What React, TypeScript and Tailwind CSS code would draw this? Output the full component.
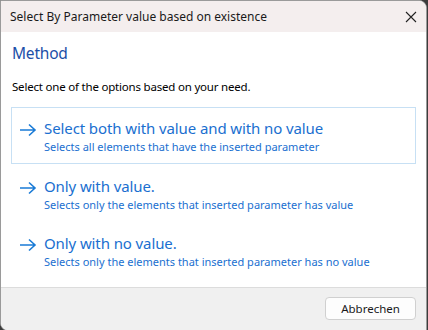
import React from 'react';

const options = [
  {
    title: 'Select both with value and with no value',
    desc: 'Selects all elements that have the inserted parameter',
    active: true,
  },
  {
    title: 'Only with value.',
    desc: 'Selects only the elements that inserted parameter has value',
    active: false,
  },
  {
    title: 'Only with no value.',
    desc: 'Selects only the elements that inserted parameter has no value',
    active: false,
  },
];

const Arrow = () => (
  <svg width="18" height="14" viewBox="0 0 18 14" className="shrink-0">
    <path d="M1 7h15M10 1.5L16 7l-6 5.5" fill="none" stroke="#1a7bd6" strokeWidth="1.6" />
  </svg>
);

export default function App() {
  return (
    <div
      className="w-[428px] h-[330px] bg-[#3c3c3c] overflow-hidden"
      style={{ fontFamily: '"Noto Sans", "Open Sans", Arial, sans-serif' }}
    >
      <div className="w-[427px] h-[331px] bg-white rounded-tr-lg rounded-bl-lg border border-[#9a9a9a] flex flex-col overflow-hidden">
        <div className="h-[31px] bg-[#f4eeee] flex items-center justify-between pl-[9px] pr-[9px] shrink-0">
          <span className="text-[12px] text-[#1a1a1a]">Select By Parameter value based on existence</span>
          <svg width="12" height="12" viewBox="0 0 12 12">
            <path d="M1 1l10 10M11 1L1 11" stroke="#222" strokeWidth="1.1" />
          </svg>
        </div>
        <div className="flex-1 flex flex-col px-[10px]">
          <div className="pt-[10px] pl-[1px] text-[15.5px] tracking-[-0.2px] text-[#1c4fa8] leading-[22px]">Method</div>
          <div className="pt-[15px] pl-[1px] text-[11.5px] tracking-[-0.2px] text-black leading-[16px]">
            Select one of the options based on your need.
          </div>
          <div className="mt-[12px] flex flex-col">
            {options.map(o => (
              <div
                key={o.title}
                className={`h-[57px] flex items-start pl-[7px] pt-[10px] border ${
                  o.active ? 'border-[#c7e0f4] h-[56px] mb-[1px]' : 'border-transparent'
                }`}
              >
                <div className="pt-[5px] pr-[7px]">
                  <Arrow />
                </div>
                <div className="flex flex-col">
                  <span className="text-[15px] tracking-[-0.1px] leading-[21px] text-[#1a6fd0]">{o.title}</span>
                  <span className="text-[11px] leading-[15px] text-[#1a6fd0]">{o.desc}</span>
                </div>
              </div>
            ))}
          </div>
        </div>
        <div className="h-[43px] bg-[#f0f0f0] border-t border-[#dcdcdc] flex items-start justify-end pt-[9px] pr-[10px] shrink-0">
          <button className="w-[91px] h-[23px] bg-[#fdfdfd] border border-[#d0d0d0] rounded-[4px] text-[11.5px] text-[#1a1a1a]">
            Abbrechen
          </button>
        </div>
      </div>
    </div>
  );
}
